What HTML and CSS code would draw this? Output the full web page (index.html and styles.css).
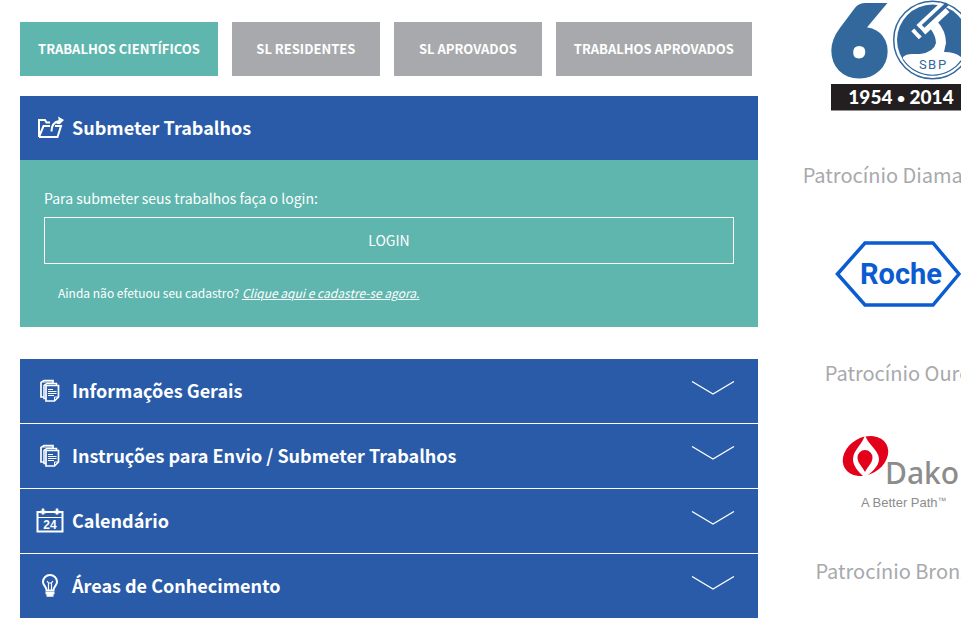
FILE: index.html
```html
<!DOCTYPE html>
<html lang="pt-BR">
<head>
<meta charset="utf-8">
<meta name="viewport" content="width=device-width, initial-scale=1">
<title>Trabalhos Científicos</title>
<link rel="stylesheet" href="styles.css">
</head>
<body>
<svg class="sprite" aria-hidden="true">
  <symbol id="docs" viewBox="0 -1 28 28">
    <path d="M8 20H5V5.500L8 3.500H17V6" fill="none" stroke="currentColor" stroke-width="1.700"/>
    <path d="M7 5H16" fill="none" stroke="currentColor" stroke-width="1"/>
    <path d="M10 21.500H8V8.500L11 6.500H20.500V9" fill="none" stroke="currentColor" stroke-width="1.500"/>
    <path d="M10 8.500H22.500V20L18.500 24H10Z" fill="none" stroke="currentColor" stroke-width="1.700"/>
    <path d="M12 12.500H17M12 14.500H20.500M12 16.500H20.500M12 18.500H18M18.500 24V20H22.500" fill="none" stroke="currentColor" stroke-width="1"/>
  </symbol>
  <symbol id="chevron" viewBox="0 0 44 14">
    <path d="M1 .5L22 13L43 .5" fill="none" stroke="currentColor" stroke-width="1.300"/>
  </symbol>
</svg>
<div class="page">
  <main class="content">
    <nav class="tabs">
      <a class="tab active" href="#cientificos">TRABALHOS CIENTÍFICOS</a>
      <a class="tab" href="#residentes">SL RESIDENTES</a>
      <a class="tab" href="#sl-aprovados">SL APROVADOS</a>
      <a class="tab" href="#aprovados">TRABALHOS APROVADOS</a>
    </nav>

    <section class="submit">
      <h2 class="bar">
        <svg class="icon" viewBox="0 0 28 28" fill="none" stroke="currentColor" stroke-width="2" aria-hidden="true">
          <path d="M3 24V7H9L10.500 9.500H14"/>
          <path d="M3 24L7.500 13H14M19 13H25L21.500 24H3M20.500 10H24"/>
          <path d="M15.500 18.500C15.500 12.500 18 9 23 8"/>
          <path d="M22 3.500L28 7L23.500 11.500Z" fill="currentColor" stroke="none"/>
        </svg>
        <span>Submeter Trabalhos</span>
      </h2>
      <div class="panel">
        <p class="lead">Para submeter seus trabalhos faça o login:</p>
        <button class="login" type="button">LOGIN</button>
        <p class="signup">Ainda não efetuou seu cadastro? <a href="#cadastro">Clique aqui e cadastre-se agora.</a></p>
      </div>
    </section>

    <section class="accordion">
      <button class="bar" type="button">
        <svg class="icon" aria-hidden="true"><use href="#docs"/></svg>
        <span>Informações Gerais</span>
        <svg class="chevron" aria-hidden="true"><use href="#chevron"/></svg>
      </button>
      <button class="bar" type="button">
        <svg class="icon" aria-hidden="true"><use href="#docs"/></svg>
        <span>Instruções para Envio / Submeter Trabalhos</span>
        <svg class="chevron" aria-hidden="true"><use href="#chevron"/></svg>
      </button>
      <button class="bar" type="button">
        <svg class="icon" viewBox="0 0 28 28" aria-hidden="true">
          <path d="M1.500 6H26.500V25.500H1.500Z" fill="none" stroke="currentColor" stroke-width="2"/>
          <path d="M1.500 11.500H26.500" stroke="currentColor" stroke-width="1"/>
          <path d="M7 2.500V8.500M21 2.500V8.500M4 6H10M18 6H24" stroke="currentColor" stroke-width="2.500"/>
          <text class="day" x="14" y="23" text-anchor="middle">24</text>
        </svg>
        <span>Calendário</span>
        <svg class="chevron" aria-hidden="true"><use href="#chevron"/></svg>
      </button>
      <button class="bar" type="button">
        <svg class="icon" viewBox="0 0 28 28" fill="none" stroke="currentColor" aria-hidden="true">
          <path d="M10.500 19.500C10.500 15.500 7 14.500 7 11A7 7 0 0 1 21 11C21 14.500 17.500 15.500 17.500 19.500Z" stroke-width="2"/>
          <path d="M12.500 19V12L11 10M15.500 19V12L17 10M12.500 12H15.500" stroke-width="1.200"/>
          <path d="M9.500 22H18.500M10.500 24.500H17.500" stroke-width="2.300"/>
        </svg>
        <span>Áreas de Conhecimento</span>
        <svg class="chevron" aria-hidden="true"><use href="#chevron"/></svg>
      </button>
    </section>
  </main>

  <aside class="sidebar">
    <svg class="brand" viewBox="823 0 150 112" role="img" aria-label="SBP 60">
      <text class="six" x="833" y="73">6</text>
      <circle cx="932.500" cy="40" r="38.800" fill="#fff" stroke="#33689c" stroke-width="1.500"/>
      <circle cx="932.500" cy="40" r="35.500" fill="#33689c"/>
      <path d="M903 57Q906 54 912 54H920Q934 52 936 43Q936 36 930 28L937 21Q946 31 946 43L944 52Q955 52 961 57L962 59.500A35.500 35.500 0 0 1 903 59.500Z" fill="#fff"/>
      <path d="M903 59.500A35.500 35.500 0 0 0 962 59.500" fill="none" stroke="#33689c" stroke-width="1.200"/>
      <g transform="rotate(-43 930 22)">
        <path d="M918 15H951V28H918Z" fill="#fff"/>
        <path d="M922 18.500H955V22.500H922Z" fill="#33689c"/>
        <path d="M910 16H914V27H910Z" fill="#fff"/>
        <path d="M914 19H918V24H914Z" fill="#33689c"/>
      </g>
      <text class="sbp" x="919" y="69">S</text>
      <text class="sbp" x="928" y="69">B</text>
      <text class="sbp" x="938" y="69">P</text>
      <path d="M831 84H970V110.500H831Z" fill="#231f20"/>
      <text class="years" x="901" y="104" text-anchor="middle">1954 <tspan class="dot" dy="-1">•</tspan><tspan dy="1"> 2014</tspan></text>
    </svg>

    <h3>Patrocínio Diamante</h3>
    <div class="sponsor">
      <svg width="126" height="68" viewBox="0 0 126 68" role="img" aria-label="Roche">
        <path d="M2.500 34L30 3H98L124 34L98 65H30Z" fill="none" stroke="#0a5cd0" stroke-width="3.500"/>
        <text class="roche" x="66" y="44" text-anchor="middle">Roche</text>
      </svg>
    </div>
    <h3>Patrocínio Ouro</h3>
    <div class="sponsor">
      <svg width="126" height="76" viewBox="-6 -2 126 76" role="img" aria-label="Dako">
        <ellipse cx="24.500" cy="20" rx="24" ry="18.500" transform="rotate(-30 24.500 20)" fill="#e2001a"/>
        <path d="M24 -2C23 7 12 14 12 23C12 31 19 37 24 42C29 37 38 31 38 23C38 14 25 7 24 -2Z" fill="#fff"/>
        <path d="M24 36C21 30 16.500 27 16.500 21.500A7.500 7.500 0 0 1 31.500 21.500C31.500 27 27 30 24 36Z" fill="#e2001a"/>
        <text class="dako" x="44" y="48">Dako</text>
        <text class="path" x="20" y="71">A Better Path<tspan class="tm" dy="-3">™</tspan></text>
      </svg>
    </div>
    <h3>Patrocínio Bronze</h3>
  </aside>
</div>
</body>
</html>
```
FILE: styles.css
```css
* { box-sizing: border-box; }

body {
  margin: 0;
  overflow-x: hidden;
  background: #fff;
  color: #fff;
  font-family: "Noto Sans CJK JP", "Noto Sans", sans-serif;
}

h2, h3, p { margin: 0; }

.sprite { position: absolute; width: 0; height: 0; }

.page { display: flex; gap: 20px; padding-left: 20px; overflow: hidden; }

.content { flex: 1; min-width: 0; padding-top: 22px; }

.tabs { display: flex; gap: 14px; margin-bottom: 20px; }

.tab {
  min-width: 148px;
  padding: 0 18px;
  background: #a7a9ac;
  color: #fff;
  font-size: 13px;
  font-weight: 700;
  line-height: 54px;
  text-align: center;
  text-decoration: none;
  white-space: nowrap;
}

.tab.active { background: #5eb6ae; }

.bar {
  display: flex;
  align-items: center;
  gap: 8px;
  width: 100%;
  height: 64px;
  padding: 0 23px 2px 16px;
  border: 0;
  background: #295ba9;
  color: #fff;
  font-family: inherit;
  font-size: 18px;
  font-weight: 700;
  line-height: 28px;
  text-align: left;
}

.icon { flex: none; width: 28px; height: 28px; }

.chevron { width: 44px; height: 14px; margin: 0 0 5px auto; }

.day { fill: currentColor; font: 700 12px "Liberation Sans", sans-serif; }

.panel { padding: 26px 24px 20px; background: #5eb6ae; }

.lead { font-size: 14px; line-height: 24px; margin-bottom: 7px; }

.login {
  display: block;
  width: 100%;
  height: 47px;
  padding: 0 0 2px;
  border: 1px solid #fff;
  background: transparent;
  color: #fff;
  font-family: inherit;
  font-size: 14px;
  line-height: 24px;
}

.signup { padding: 19px 14px 4px; font-size: 12px; line-height: 20px; }

.signup a { color: #fff; font-style: italic; }

.accordion { display: grid; gap: 1px; margin-top: 32px; }

.sidebar {
  flex: 0 0 240px;
  margin-right: -57px;
  text-align: center;
}

.sidebar h3 {
  color: #a7a9ac;
  font-size: 20px;
  font-weight: 400;
  line-height: 30px;
  white-space: nowrap;
}

.brand { display: block; width: 150px; height: 112px; margin: 0 auto 48px; }

.sponsor { display: flex; align-items: center; justify-content: center; height: 168px; }

.six { fill: #33689c; stroke: #33689c; stroke-width: 10px; font: 900 90px Lato, sans-serif; }
.sbp { fill: #33689c; font: 400 13px Roboto, sans-serif; }
.years { fill: #fff; font: 900 19px Lato, sans-serif; }
.dot { font-size: 14px; }
.roche { fill: #0a5cd0; font: 700 29px Roboto, sans-serif; }
.dako { fill: #8c8c8c; font: 500 30px "Noto Sans", sans-serif; }
.path { fill: #8c8c8c; font: 400 13px "Liberation Sans", sans-serif; }
.tm { font-size: 9px; }
```
